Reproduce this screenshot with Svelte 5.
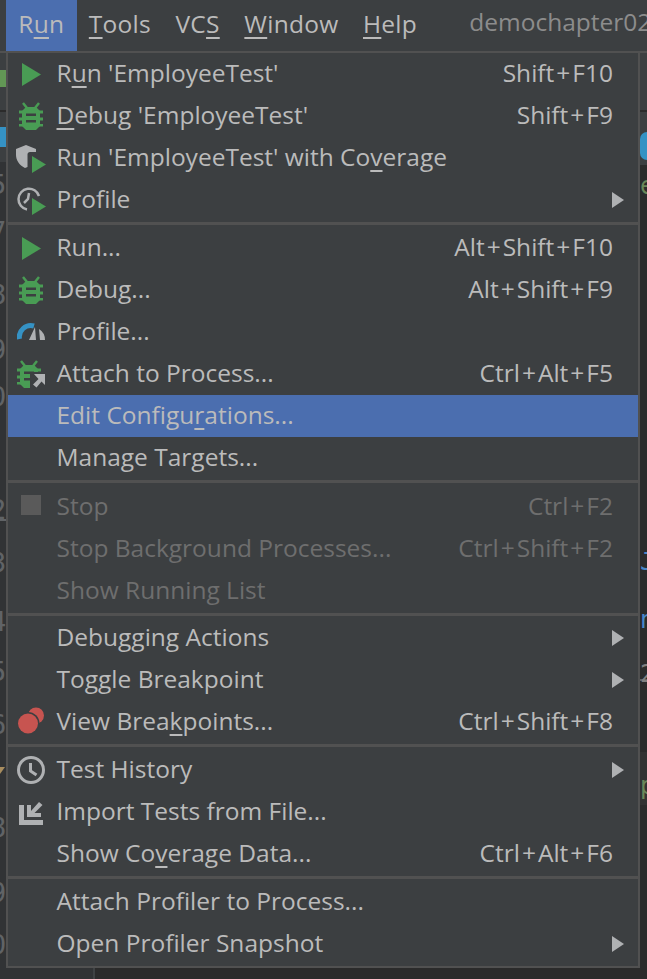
<script>
  const groups = [
    [
      { pre: 'R', u: 'u', post: "n 'EmployeeTest'", key: 'Shift+F10', icon: 'run' },
      { pre: '', u: 'D', post: "ebug 'EmployeeTest'", key: 'Shift+F9', icon: 'bug' },
      { pre: "Run 'EmployeeTest' with Co", u: 'v', post: 'erage', icon: 'cover' },
      { pre: 'Profile', arrow: true, icon: 'profile' }
    ],
    [
      { pre: 'Run...', key: 'Alt+Shift+F10', icon: 'run' },
      { pre: 'Debug...', key: 'Alt+Shift+F9', icon: 'bug' },
      { pre: 'Profile...', icon: 'gauge' },
      { pre: 'Attach to Process...', key: 'Ctrl+Alt+F5', icon: 'attach' },
      { pre: 'Edit Configu', u: 'r', post: 'ations...', active: true },
      { pre: 'Manage Targets...' }
    ],
    [
      { pre: 'Stop', key: 'Ctrl+F2', icon: 'stop', off: true },
      { pre: 'Stop Background Processes...', key: 'Ctrl+Shift+F2', off: true },
      { pre: 'Show Running List', off: true }
    ],
    [
      { pre: 'Debugging Actions', arrow: true },
      { pre: 'Toggle Breakpoint', arrow: true },
      { pre: 'View Brea', u: 'k', post: 'points...', key: 'Ctrl+Shift+F8', icon: 'breaks' }
    ],
    [
      { pre: 'Test History', arrow: true, icon: 'clock' },
      { pre: 'Import Tests from File...', icon: 'import' },
      { pre: 'Show Co', u: 'v', post: 'erage Data...', key: 'Ctrl+Alt+F6' }
    ],
    [
      { pre: 'Attach Profiler to Process...' },
      { pre: 'Open Profiler Snapshot', arrow: true }
    ]
  ];
  const afterSep = [0, 2, 3, 1, 2, 2];
  const digits = [
    ['5', 185], ['7', 232], ['8', 295], ['9', 350], ['0', 397], ['2', 510], ['3', 563],
    ['4', 622], ['5', 672], ['6', 725], ['8', 828], ['9', 893], ['0', 945]
  ];
  const bars = [['R', 'u', 'n', true], ['', 'T', 'ools'], ['VC', 'S', ''], ['', 'W', 'indow'], ['', 'H', 'elp']];
</script>

<div class="page">
  <header class="bar">
    {#each bars as b}
      <span class="top" class:open={b[3]}>{b[0]}<u>{b[1]}</u>{b[2]}</span>
    {/each}
    <span class="project">demochapter02</span>
  </header>
  <div class="back">
    <div class="left-top"></div>
    <div class="right-top"></div>
    <div class="gutter-end"></div>
    <div class="caret-line left"></div>
    <div class="caret-line right"></div>
    <div class="stripe"></div>
    <div class="green-tab"></div>
    <div class="blue-tab"></div>
    <div class="blue-tab right"></div>
    <div class="fold"></div>
    {#each digits as d}
      <span class="digit" style="top:{d[1] - 69}px">{d[0]}</span>
    {/each}
    <span class="peek e">e</span>
    <span class="peek j">J</span>
    <span class="peek n">n</span>
    <span class="peek two">2</span>
    <span class="peek p">p</span>
  </div>

  <nav class="menu">
    {#each groups as g, gi}
      {#if gi > 0}<div class="sep" style="margin-bottom:{afterSep[gi]}px"></div>{/if}
      {#each g as it}
        <div class="row" class:active={it.active} class:off={it.off}>
          <span class="ico">
            {#if it.icon === 'run'}
              <svg width="19" height="23" viewBox="0 0 19 23"><path d="M0 0 19 11.500 0 23z" fill="#499c54" /></svg>
            {:else if it.icon === 'bug'}
              <svg width="24" height="28" viewBox="0 0 24 28"><use href="#bugshape" /></svg>
            {:else if it.icon === 'cover'}
              <svg width="30" height="30" viewBox="0 0 30 30">
                <path d="M0 6 10 2l10 4v3h-6c-1.500 0-2.500 1-2.500 2.500V24L9 25C3 22 0 17 0 12z" fill="#afb1b3" />
                <path d="M16 13 30 21.500 16 30z" fill="#499c54" />
              </svg>
            {:else if it.icon === 'profile'}
              <svg width="30" height="30" viewBox="0 0 30 30">
                <path d="M11 24.500A10.500 10.500 0 1 1 23 11" fill="none" stroke="#afb1b3" stroke-width="2.500" />
                <path d="M13 8l-1 6-4 4" fill="none" stroke="#afb1b3" stroke-width="2.500" />
                <path d="M16 13 30 21.500 16 30z" fill="#499c54" />
              </svg>
            {:else if it.icon === 'gauge'}
              <svg width="28" height="24" viewBox="0 -2 28 24">
                <path d="M2.500 17A11.500 11.500 0 0 1 17 4" fill="none" stroke="#3592c4" stroke-width="5" />
                <path d="M18 5 12 18h7z M22 7a13 13 0 0 1 6 11h-5z" fill="#afb1b3" />
              </svg>
            {:else if it.icon === 'attach'}
              <svg width="28" height="28" viewBox="0 0 28 28">
                <use href="#bugshape" />
                <path d="M13 12h15v16H13z" fill="#3c3f41" />
                <path d="M17 14h11v11l-3.500-3.500-5 6-3.500-3 5.500-5.500z" fill="#afb1b3" />
              </svg>
            {:else if it.icon === 'stop'}
              <span class="square"></span>
            {:else if it.icon === 'breaks'}
              <svg width="26" height="30" viewBox="0 0 26 30">
                <circle cx="18" cy="8.500" r="8" fill="#c75450" />
                <circle cx="10" cy="16.500" r="11.500" fill="#3c3f41" />
                <circle cx="10" cy="16.500" r="10" fill="#c75450" />
              </svg>
            {:else if it.icon === 'clock'}
              <svg width="28" height="28" viewBox="0 0 28 28">
                <circle cx="14" cy="14" r="12.500" fill="none" stroke="#afb1b3" stroke-width="3" />
                <path d="M13.500 7v8l6 4" fill="none" stroke="#afb1b3" stroke-width="3" />
              </svg>
            {:else if it.icon === 'import'}
              <svg width="24" height="25" viewBox="0 0 24 25">
                <path d="M0 5h5v15h19v5H0z M8 5h4v6l8-9 3.500 3-8 8H22v4H8z" fill="#afb1b3" />
              </svg>
            {/if}
          </span>
          <span class="label">{it.pre}{#if it.u}<u>{it.u}</u>{/if}{it.post ?? ''}</span>
          {#if it.key}
            <span class="key">{#each it.key.split('+') as part, i}{#if i}<i class="plus">+</i>{/if}{part}{/each}</span>
          {/if}
          {#if it.arrow}<span class="arrow"></span>{/if}
        </div>
      {/each}
    {/each}
  </nav>

  <svg class="defs" width="0" height="0">
    <defs>
      <g id="bugshape">
        <path d="M4 1 8 6 M20 1 16 6" stroke="#499c54" stroke-width="2.500" fill="none" />
        <path d="M7 5h10l4 4v15l-4 4H7l-4-4V9z" fill="#499c54" />
        <path d="M0 8.500h24v3H0z M0 15.500h24v3H0z M0 22h24v2.500H0z" fill="#499c54" />
        <path d="M7 11.500h10v2.500H7z M7 18h10v2.500H7z" fill="#3c3f41" />
      </g>
    </defs>
  </svg>
</div>

<style>
  :global(body) { margin: 0; background: #2b2b2b; }
  .page {
    position: relative;
    width: 647px;
    height: 979px;
    overflow: hidden;
    background: #2b2b2b;
    font-family: "Open Sans", "Noto Sans", sans-serif;
  }
  .bar {
    height: 51px;
    display: flex;
    align-items: flex-start;
    background: #3c3f41;
    padding-left: 6px;
    color: #bbbbbb;
    font-size: 24.500px;
    border-bottom: 2px solid #515151;
  }
  .top {
    height: 51px;
    line-height: 48px;
    padding: 0 12.300px;
    letter-spacing: .25px;
  }
  .top.open { background: #4b6eaf; }
  .top u, .label u { text-underline-offset: 4px; text-decoration-thickness: 2px; }
  .project { margin-left: 40px; line-height: 44px; color: #8c8c8c; white-space: nowrap; }
  .back { position: absolute; inset: 53px 0 0 0; background: #2b2b2b; }
  .left-top {
    position: absolute; left: 0; top: 0; width: 7px; height: 109px;
    background: linear-gradient(#3c3f41 57px, #2b2b2b 57px, #2b2b2b 59px, #3c3f41 59px);
  }
  .right-top {
    position: absolute; right: 0; top: 0; width: 7px; height: 112px;
    background: linear-gradient(#3c3f41 57px, #2b2b2b 57px, #2b2b2b 59px, #3c3f41 59px);
  }
  .gutter-end { position: absolute; left: 0; top: 109px; bottom: 0; width: 93px; background: #313335; border-right: 2px solid #3f4244; }
  .caret-line { position: absolute; height: 2px; width: 7px; background: #606366; top: 466px; }
  .caret-line.left { left: 0; }
  .caret-line.right { right: 0; top: 626px; }
  .stripe { position: absolute; right: 0; top: 699px; width: 7px; height: 53px; background: #323232; }
  .green-tab { position: absolute; left: 0; top: 17px; width: 7px; height: 17px; background: #629755; }
  .blue-tab { position: absolute; left: 0; top: 74px; width: 6px; height: 20px; background: #3592c4; }
  .blue-tab.right { left: auto; right: 0; top: 79px; width: 7px; height: 28px; border-radius: 14px 0 0 14px; }
  .fold {
    position: absolute; left: 0; top: 714px; width: 0; height: 0;
    border-top: 7px solid #a88d5f; border-right: 5px solid transparent;
  }
  .digit {
    position: absolute;
    left: -10px;
    font-family: "DejaVu Sans Mono", monospace;
    font-size: 27px;
    line-height: 32px;
    color: #606366;
  }
  .peek { position: absolute; left: 640px; font-size: 24px; line-height: 30px; color: #a9b7c6; font-family: "DejaVu Sans Mono", monospace; }
  .peek.e { top: 118px; color: #6a8759; }
  .peek.j { top: 494px; color: #4a86c8; }
  .peek.n { top: 552px; color: #4a86c8; }
  .peek.two { top: 606px; color: #808080; }
  .peek.p { top: 718px; color: #6a8759; }
  .menu {
    position: absolute;
    left: 6px;
    top: 53px;
    width: 630px;
    padding: 0 0 1px;
    background: #3c3f41;
    border: 2px solid #515151;
    border-top: 0;
    color: #bbbbbb;
    font-size: 24.500px;
  }
  .row {
    height: 42px;
    display: flex;
    align-items: center;
    position: relative;
    padding-right: 25px;
  }
  .row.active { background: #4b6eaf; }
  .row.off { color: #6e6e6e; }
  .ico {
    width: 48.500px;
    flex: none;
    height: 42px;
    display: flex;
    align-items: center;
    justify-content: center;
    padding-right: 2.500px;
    box-sizing: border-box;
  }
  .ico svg { flex: none; }
  .label { flex: 1; white-space: nowrap; padding-bottom: 3px; }
  .key { white-space: nowrap; padding-bottom: 3px; }
  .plus { font-style: normal; margin: 0 2px; }
  .arrow {
    position: absolute;
    right: 14px;
    top: 13px;
    width: 0;
    height: 0;
    border-left: 12px solid #afb1b3;
    border-top: 8px solid transparent;
    border-bottom: 8px solid transparent;
  }
  .sep { height: 3px; background: #515151; margin-top: 1px; }
  .square { width: 20px; height: 20px; background: #5a5a5a; margin-bottom: 4px; }
  .defs { position: absolute; }
</style>
